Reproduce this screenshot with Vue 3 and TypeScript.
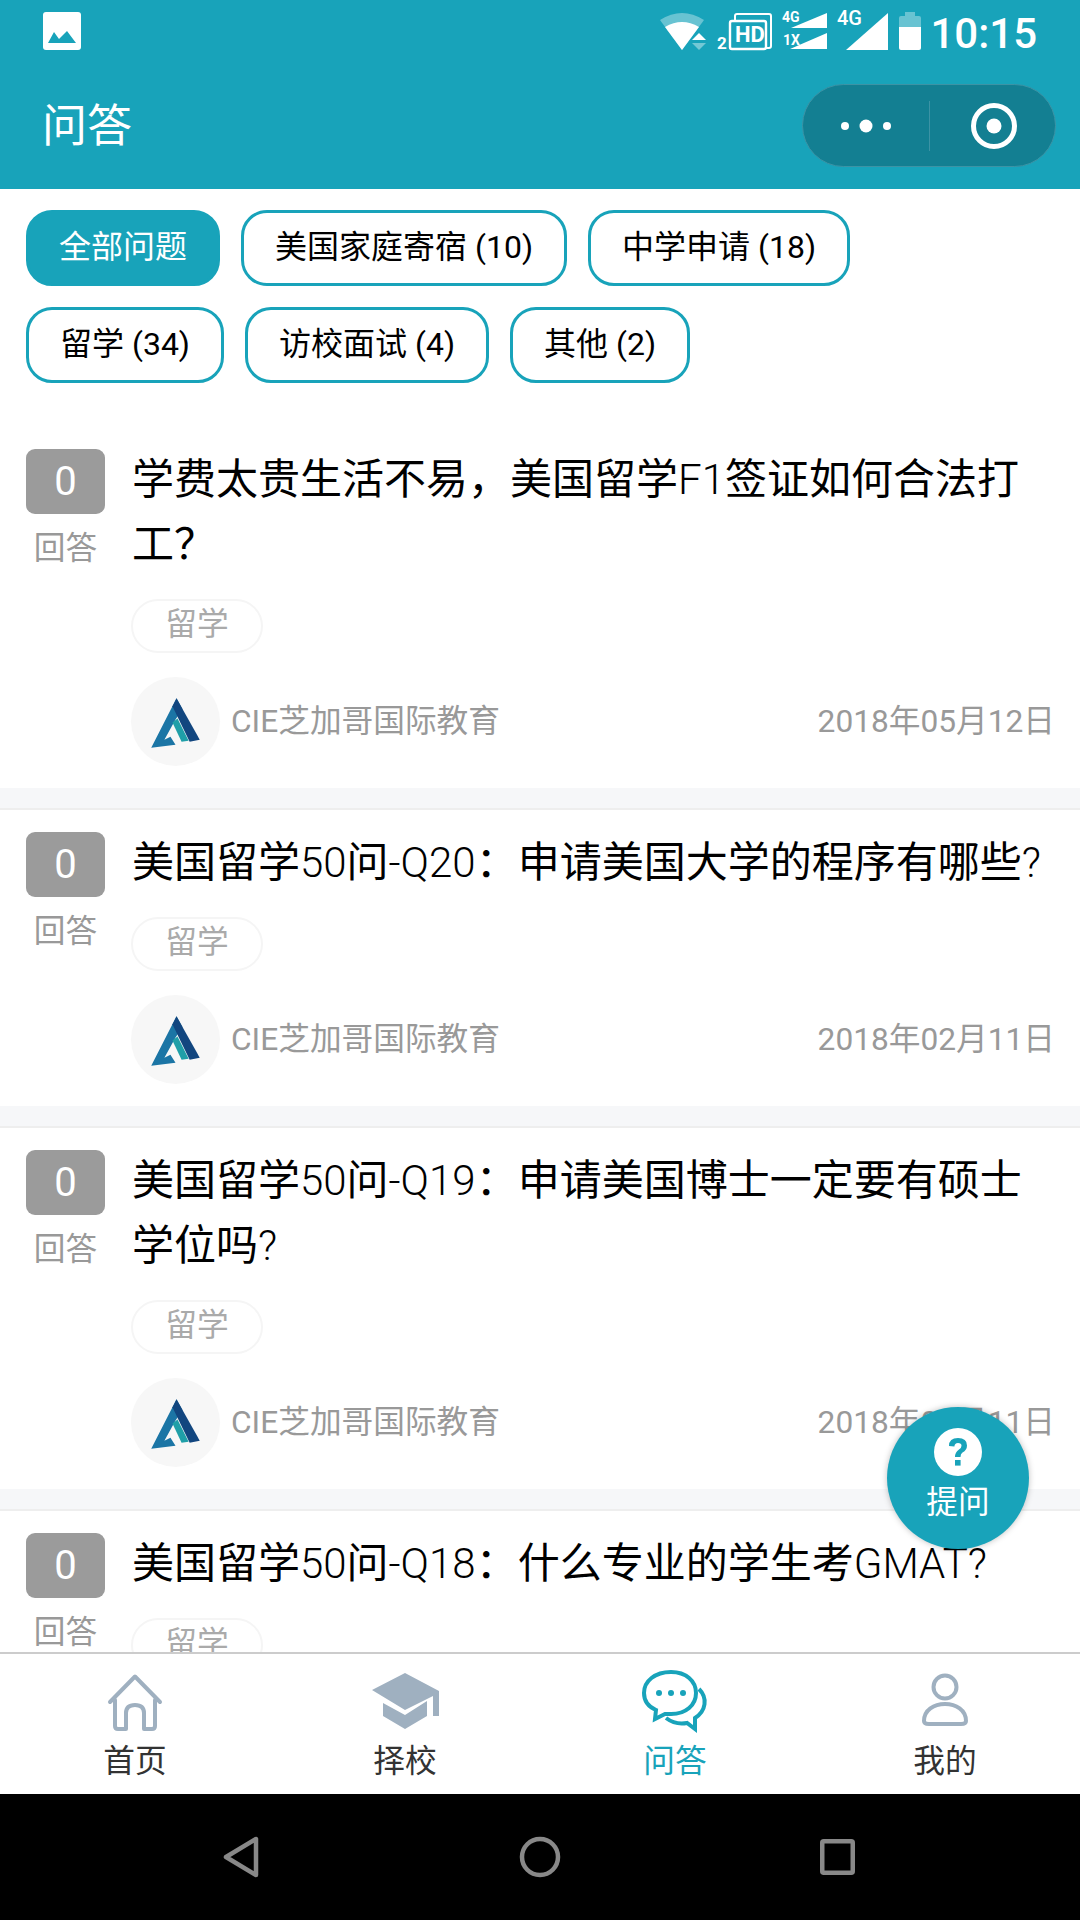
<script setup lang="ts">
type Question = {
  id: number
  title: string
  tag: string
  author?: string
  date?: string
  answers: number
}

const filters = [
  { label: '全部问题', active: true },
  { label: '美国家庭寄宿 (10)' },
  { label: '中学申请 (18)' },
  { label: '留学 (34)' },
  { label: '访校面试 (4)' },
  { label: '其他 (2)' },
]

const questions: Question[] = [
  { id: 1, title: '学费太贵生活不易，美国留学F1签证如何合法打工？', tag: '留学', author: 'CIE芝加哥国际教育', date: '2018年05月12日', answers: 0 },
  { id: 2, title: '美国留学50问-Q20：申请美国大学的程序有哪些?', tag: '留学', author: 'CIE芝加哥国际教育', date: '2018年02月11日', answers: 0 },
  { id: 3, title: '美国留学50问-Q19：申请美国博士一定要有硕士学位吗?', tag: '留学', author: 'CIE芝加哥国际教育', date: '2018年02月11日', answers: 0 },
  { id: 4, title: '美国留学50问-Q18：什么专业的学生考GMAT?', tag: '留学', answers: 0 },
]

const tabs = [
  { key: 'home', label: '首页' },
  { key: 'school', label: '择校' },
  { key: 'qa', label: '问答', active: true },
  { key: 'me', label: '我的' },
]
</script>

<template>
  <div class="page">
    <header class="header">
      <div class="status">
        <svg class="photo" width="38" height="38" viewBox="0 0 38 38">
          <rect width="38" height="38" rx="3" fill="#fff" />
          <path d="M5 31 L11 20 L16 27 L24 19 L33 31 Z" fill="#18a3ba" />
        </svg>
        <svg class="status-icons" width="270" height="50" viewBox="655 6 270 50">
          <path d="M660 20 Q682 6 704 20 L682 50 Z" fill="#fff" fill-opacity="0.35" />
          <path d="M665 27 Q682 17 699 27 L682 50 Z" fill="#fff" />
          <path d="M699 33 L706 40 L692 40 Z" fill="#fff" />
          <path d="M692 43 L706 43 L699 50 Z" fill="#fff" fill-opacity="0.4" />
          <text x="717" y="49" class="s2">2</text>
          <path d="M735 20 V16 Q735 14 737 14 H769 Q771 14 771 16 V46 Q771 48 769 48 H766" fill="none" stroke="#fff" stroke-width="2" />
          <rect x="730" y="21" width="36" height="28" rx="2" fill="#18a3ba" stroke="#fff" stroke-width="2.4" />
          <text x="735" y="42" class="hd">HD</text>
          <text x="782" y="22" class="s4">4G</text>
          <path d="M791 28 L827 13 V28 Z" fill="#fff" />
          <text x="783" y="45" class="s4">1X</text>
          <path d="M790 49 L827 33 V49 Z" fill="#fff" />
          <text x="837" y="25" class="b4">4G</text>
          <path d="M846 50 L888 13 V50 Z" fill="#fff" />
          <path d="M905 12 H915 V16 H919 Q921 16 921 18 V27 H899 V18 Q899 16 901 16 H905 Z" fill="#fff" fill-opacity="0.35" />
          <path d="M899 27 H921 V48 Q921 50 919 50 H901 Q899 50 899 48 Z" fill="#fff" />
        </svg>
        <span class="time">10:15</span>
      </div>
      <div class="nav">
        <span class="nav-title">问答</span>
        <div class="capsule">
          <div class="capsule-side">
            <svg width="52" height="16" viewBox="0 0 52 16">
              <circle cx="5" cy="8" r="4" fill="#fff" />
              <circle cx="26" cy="8" r="6.5" fill="#fff" />
              <circle cx="47" cy="8" r="4" fill="#fff" />
            </svg>
          </div>
          <div class="capsule-line"></div>
          <div class="capsule-side">
            <svg class="target" width="48" height="48" viewBox="0 0 48 48">
              <circle cx="24" cy="24" r="20.5" fill="none" stroke="#fff" stroke-width="5" />
              <circle cx="24" cy="24" r="7.5" fill="#fff" />
            </svg>
          </div>
        </div>
      </div>
    </header>

    <main class="content">
      <div class="filters">
        <span
          v-for="item in filters"
          :key="item.label"
          class="chip"
          :class="{ active: item.active }"
        >{{ item.label }}</span>
      </div>

      <article v-for="q in questions" :key="q.id" class="question">
        <div class="question-body">
          <div class="count">
            <span class="count-num">{{ q.answers }}</span>
            <span class="count-label">回答</span>
          </div>
          <div class="main">
            <h3 class="title">{{ q.title }}</h3>
            <span class="tag">{{ q.tag }}</span>
            <div v-if="q.author" class="meta">
              <span class="avatar">
                <svg width="89" height="89" viewBox="0 0 88 88">
                  <path d="M45 21 L20 70 L44 67 L39 59 L33 62 L44 42 L51 32 Z" fill="#1b75a5" />
                  <path d="M45 21 L68 62 L58 64 L41 29 Z" fill="#12467f" />
                  <path d="M41 45 L46 41 L57 63 L50 64 Z" fill="#1f9fa8" />
                </svg>
              </span>
              <span class="author">{{ q.author }}</span>
              <span class="date">{{ q.date }}</span>
            </div>
          </div>
        </div>
        <div class="divider"></div>
      </article>
    </main>

    <div class="fab">
      <svg width="48" height="48" viewBox="0 0 48 48">
        <circle cx="24" cy="24" r="24" fill="#fff" />
        <path d="M15 18 Q15 10 24 10 Q33 10 33 17.5 Q33 22 28.5 24.5 Q26.5 25.8 26.5 29 H21 Q21 24 25 21.5 Q27.5 20 27.5 17.8 Q27.5 15 24 15 Q20.6 15 20.4 18.5 Z" fill="#18a3ba" />
        <rect x="21" y="32" width="5.6" height="5.6" fill="#18a3ba" />
      </svg>
      <span class="fab-label">提问</span>
    </div>

    <footer class="tabbar">
      <div v-for="tab in tabs" :key="tab.key" class="tab" :class="{ active: tab.active }">
        <svg class="tab-icon" width="70" height="66" viewBox="0 0 70 66">
          <template v-if="tab.key === 'home'">
            <path
              d="M10 34 L35 8.5 L60 34 M15 32 V58 Q15 61 18 61 H26 V45 Q26 37 35 37 Q44 37 44 45 V61 H52 Q55 61 55 58 V32"
              fill="none" stroke="#9fb0c0" stroke-width="4" stroke-linejoin="round" stroke-linecap="round"
            />
          </template>
          <template v-else-if="tab.key === 'school'">
            <path d="M35 5 L2 22 L35 42 L63 28 V48 H69 V23 Z" fill="#9fb0c0" />
            <path d="M13 35 L35 47 L57 33 V48 L35 61 L13 48 Z" fill="#9fb0c0" />
          </template>
          <template v-else-if="tab.key === 'qa'">
            <path
              d="M31 4 C15 4 4 13 4 25 C4 33 9 39 16 42 L15 51 L25 46 C27 46 29 46 31 46 C46 46 56 37 56 25 C56 13 46 4 31 4 Z"
              fill="none" stroke="#18a3ba" stroke-width="4"
            />
            <circle cx="19" cy="25" r="3" fill="#18a3ba" />
            <circle cx="31" cy="25" r="3" fill="#18a3ba" />
            <circle cx="43" cy="25" r="3" fill="#18a3ba" />
            <path
              d="M26 50 C34 56 42 56 47 55 L55 61 L55 50 C66 43 68 30 59 21"
              fill="none" stroke="#18a3ba" stroke-width="4"
            />
          </template>
          <template v-else>
            <circle cx="35" cy="19" r="11.5" fill="none" stroke="#9fb0c0" stroke-width="4" />
            <path
              d="M14 53 C14 42 24 36 35 36 C46 36 56 42 56 53 C56 55 54 56 51 56 H19 C16 56 14 55 14 53 Z"
              fill="none" stroke="#9fb0c0" stroke-width="4"
            />
          </template>
        </svg>
        <span class="tab-label">{{ tab.label }}</span>
      </div>
    </footer>

    <div class="softkeys">
      <svg width="40" height="44" viewBox="0 0 40 44">
        <path d="M36 4 V40 L6 22 Z" fill="none" stroke="#888" stroke-width="4.5" stroke-linejoin="round" />
      </svg>
      <svg width="44" height="44" viewBox="0 0 44 44">
        <circle cx="22" cy="22" r="18" fill="none" stroke="#888" stroke-width="4.5" />
      </svg>
      <svg width="40" height="40" viewBox="0 0 40 40">
        <rect x="4.25" y="4.25" width="30.5" height="31.5" rx="1.5" fill="none" stroke="#888" stroke-width="4.5" />
      </svg>
    </div>
  </div>
</template>

<style scoped>
.page {
  position: relative;
  width: 1080px;
  height: 1920px;
  display: flex;
  flex-direction: column;
  overflow: hidden;
  background: #fff;
  font-family: Roboto, "Noto Sans CJK SC", sans-serif;
}

.header {
  height: 189px;
  background: #18a3ba;
  flex-shrink: 0;
}

.status {
  height: 62px;
  display: flex;
  align-items: flex-start;
  padding: 12px 43px 0;
  box-sizing: border-box;
  position: relative;
}

.photo {
  display: block;
}

.status-icons {
  margin-left: auto;
  margin-top: -6px;
  margin-right: 5px;
  display: block;
}

.s2 {
  font: 700 17px Roboto, sans-serif;
  fill: #fff;
}

.hd {
  font: 700 22px Roboto, sans-serif;
  fill: #fff;
}

.s4 {
  font: 700 14px Roboto, sans-serif;
  fill: #fff;
}

.b4 {
  font: 500 20px Roboto, sans-serif;
  fill: #fff;
}

.time {
  color: #fff;
  font-size: 42px;
  font-weight: 500;
  line-height: 44px;
}

.nav {
  height: 127px;
  display: flex;
  align-items: flex-start;
  justify-content: space-between;
  padding: 22px 24px 0 42px;
}

.nav-title {
  color: #fff;
  font-size: 45px;
  line-height: 85px;
}

.capsule {
  width: 254px;
  height: 83px;
  box-sizing: border-box;
  border: 1px solid #3c93a5;
  border-radius: 42px;
  background: #137f92;
  display: flex;
  align-items: center;
}

.capsule-side {
  flex: 1;
  display: flex;
  justify-content: center;
  align-items: center;
}

.target {
  margin-left: 4px;
}

.capsule-line {
  width: 1px;
  height: 50px;
  background: #3c93a5;
}

.content {
  flex: 1;
  min-height: 0;
  overflow: hidden;
}

.filters {
  display: flex;
  flex-wrap: wrap;
  gap: 21px;
  padding: 21px 26px 44px;
}

.chip {
  box-sizing: border-box;
  height: 76px;
  line-height: 68px;
  padding: 0 31px;
  border: 3px solid #18a3ba;
  border-radius: 26px;
  font-size: 32px;
  color: #000;
}

.chip.active {
  padding: 0 30px;
  background: #18a3ba;
  color: #fff;
}

.question-body {
  display: flex;
  padding: 22px 25px 22px 26px;
}

.count {
  width: 79px;
  flex-shrink: 0;
  margin-right: 27px;
  display: flex;
  flex-direction: column;
  align-items: center;
}

.count-num {
  width: 79px;
  height: 65px;
  border-radius: 9px;
  background: #9b9b9b;
  color: #fff;
  font-size: 40px;
  line-height: 65px;
  text-align: center;
}

.count-label {
  margin-top: 15px;
  color: #999;
  font-size: 31.68px;
  line-height: 40px;
}

.main {
  flex: 1;
  min-width: 0;
}

.title {
  margin: -2px 0 22px;
  font-family: "Roboto Light", "Noto Sans CJK SC", sans-serif;
  font-size: 42px;
  font-weight: 400;
  line-height: 65px;
  color: #000;
}

.tag {
  display: block;
  box-sizing: border-box;
  width: 132px;
  height: 54px;
  margin-left: -1px;
  border: 2px solid #f5f5f5;
  border-radius: 27px;
  color: #aaa;
  font-size: 31.68px;
  line-height: 48px;
  text-align: center;
}

.meta {
  display: flex;
  align-items: center;
  margin-top: 24px;
  margin-left: -1px;
}

.avatar {
  width: 89px;
  height: 89px;
  border-radius: 50%;
  background: #f7f7f7;
  flex-shrink: 0;
}

.avatar svg {
  display: block;
}

.author {
  margin-left: 11px;
  margin-bottom: 7px;
  color: #999;
  font-size: 31.68px;
}

.date {
  margin-left: auto;
  margin-bottom: 7px;
  color: #999;
  font-size: 31.68px;
}

.divider {
  height: 20px;
  background: #f6f7f9;
  border-bottom: 2px solid #eee;
}

.fab {
  position: absolute;
  left: 887px;
  top: 1407px;
  width: 142px;
  height: 142px;
  border-radius: 50%;
  background: #18a3ba;
  box-shadow: 0 0 6px rgba(0, 0, 0, 0.25);
  display: flex;
  flex-direction: column;
  align-items: center;
  padding-top: 21px;
  box-sizing: border-box;
}

.fab svg {
  display: block;
}

.fab-label {
  margin-top: 5px;
  color: #fff;
  font-size: 31.68px;
  line-height: 44px;
}

.tabbar {
  height: 142px;
  flex-shrink: 0;
  box-sizing: border-box;
  border-top: 2px solid #ccc;
  display: grid;
  grid-template-columns: repeat(4, 1fr);
  background: #fff;
}

.tab {
  display: flex;
  flex-direction: column;
  align-items: center;
  padding-top: 14px;
}

.tab-icon {
  display: block;
}

.tab-label {
  margin-top: 8px;
  color: #333;
  font-size: 31.68px;
  line-height: 40px;
}

.tab.active .tab-label {
  color: #18a3ba;
}

.softkeys {
  height: 126px;
  flex-shrink: 0;
  background: #000;
  display: grid;
  grid-template-columns: 298px 300px auto;
  padding-left: 220px;
  box-sizing: border-box;
  align-items: center;
}

.softkeys svg {
  display: block;
}
</style>
